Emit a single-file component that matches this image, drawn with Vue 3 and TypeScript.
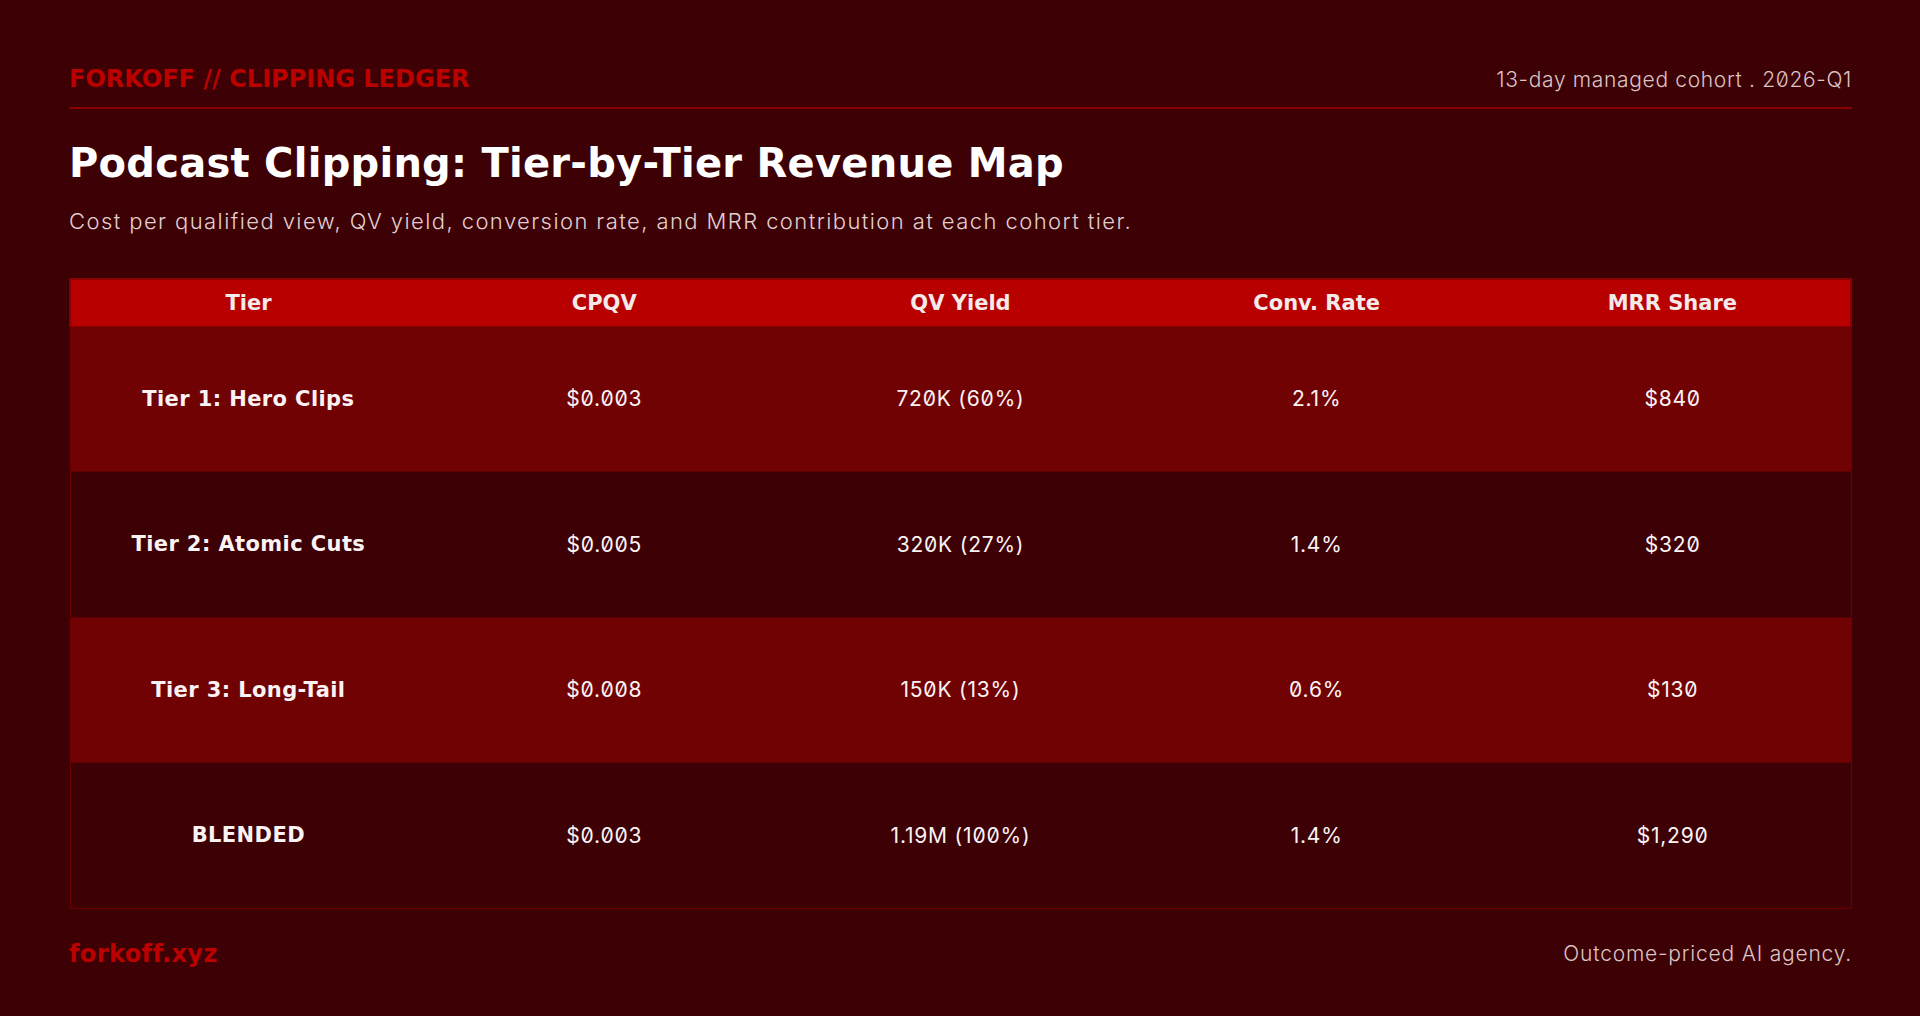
<script setup lang="ts">
interface Row {
  tier: string
  cpqv: string
  yieldText: string
  conv: string
  mrr: string
}

const headers = ['Tier', 'CPQV', 'QV Yield', 'Conv. Rate', 'MRR Share']

const rows: Row[] = [
  { tier: 'Tier 1: Hero Clips', cpqv: '$0.003', yieldText: '720K (60%)', conv: '2.1%', mrr: '$840' },
  { tier: 'Tier 2: Atomic Cuts', cpqv: '$0.005', yieldText: '320K (27%)', conv: '1.4%', mrr: '$320' },
  { tier: 'Tier 3: Long-Tail', cpqv: '$0.008', yieldText: '150K (13%)', conv: '0.6%', mrr: '$130' },
  { tier: 'BLENDED', cpqv: '$0.003', yieldText: '1.19M (100%)', conv: '1.4%', mrr: '$1,290' }
]
</script>

<template>
  <div class="page">
    <header class="top">
      <span class="brand">FORKOFF // CLIPPING LEDGER</span>
      <span class="meta">13-day managed cohort . 2026-Q1</span>
    </header>

    <h1 class="title">Podcast Clipping: Tier-by-Tier Revenue Map</h1>
    <p class="sub">Cost per qualified view, QV yield, conversion rate, and MRR contribution at each cohort tier.</p>

    <table class="ledger">
      <thead>
        <tr>
          <th v-for="h in headers" :key="h">{{ h }}</th>
        </tr>
      </thead>
      <tbody>
        <tr v-for="(row, i) in rows" :key="row.tier" :class="{ odd: i % 2 === 0 }">
          <td class="name">{{ row.tier }}</td>
          <td>{{ row.cpqv }}</td>
          <td>{{ row.yieldText }}</td>
          <td>{{ row.conv }}</td>
          <td>{{ row.mrr }}</td>
        </tr>
      </tbody>
    </table>

    <footer class="bottom">
      <span class="site">forkoff.xyz</span>
      <span class="tag">Outcome-priced AI agency.</span>
    </footer>
  </div>
</template>

<style>
html,
body {
  margin: 0;
  background: #3c0005;
}
</style>

<style scoped>
.page {
  box-sizing: border-box;
  width: 1920px;
  height: 1016px;
  padding: 61px 68px 0 69px;
  display: flex;
  flex-direction: column;
  background: #3c0005;
  font-family: Inter, "Liberation Sans", sans-serif;
  font-feature-settings: "zero";
  font-weight: 300;
  color: #fff;
}

.top {
  display: flex;
  justify-content: space-between;
  align-items: center;
  height: 36px;
  padding-bottom: 10px;
  border-bottom: 2px solid #8a0000;
}

.brand,
.title,
th,
td.name,
.site {
  font-family: "DejaVu Sans", Inter, sans-serif;
  font-weight: 700;
}

.brand {
  font-size: 24px;
  color: #bb0000;
}

.meta {
  font-size: 21px;
  letter-spacing: 0.67px;
  color: #dcc4c4;
}

.title {
  margin: 30px 0 0;
  font-size: 40px;
  line-height: 48px;
  letter-spacing: 0.26px;
}

.sub {
  margin: 20px 0 0;
  font-size: 22px;
  line-height: 28px;
  letter-spacing: 1.42px;
  color: #e2d0d0;
}

.ledger {
  margin-top: 43px;
  width: 100%;
  border-collapse: collapse;
  table-layout: fixed;
  border: 1px solid #6e0003;
}

th {
  box-sizing: border-box;
  height: 47px;
  padding: 0;
  background: #b80000;
  font-size: 21px;
  line-height: 24px;
  color: #f4eaea;
  border-top: 2px solid #8a0000;
  border-bottom: 1px solid #8a0000;
}

th:first-child {
  border-left: 2px solid #8a0000;
}

th:last-child {
  border-right: 2px solid #8a0000;
}

td {
  box-sizing: border-box;
  height: 145.5px;
  padding: 0;
  text-align: center;
  font-size: 21px;
  font-weight: 400;
  letter-spacing: 0.8px;
  color: #fbf3f3;
  border-top: 1px solid #5c0003;
}

td.name {
  font-size: 21px;
  letter-spacing: 0.4px;
}

tr.odd td {
  background: #700204;
}

.bottom {
  display: flex;
  justify-content: space-between;
  align-items: center;
  margin-top: 31px;
}

.site {
  font-size: 24px;
  letter-spacing: 0.4px;
  color: #bb0000;
}

.tag {
  font-size: 21px;
  letter-spacing: 0.8px;
  color: #dcc4c4;
}
</style>
